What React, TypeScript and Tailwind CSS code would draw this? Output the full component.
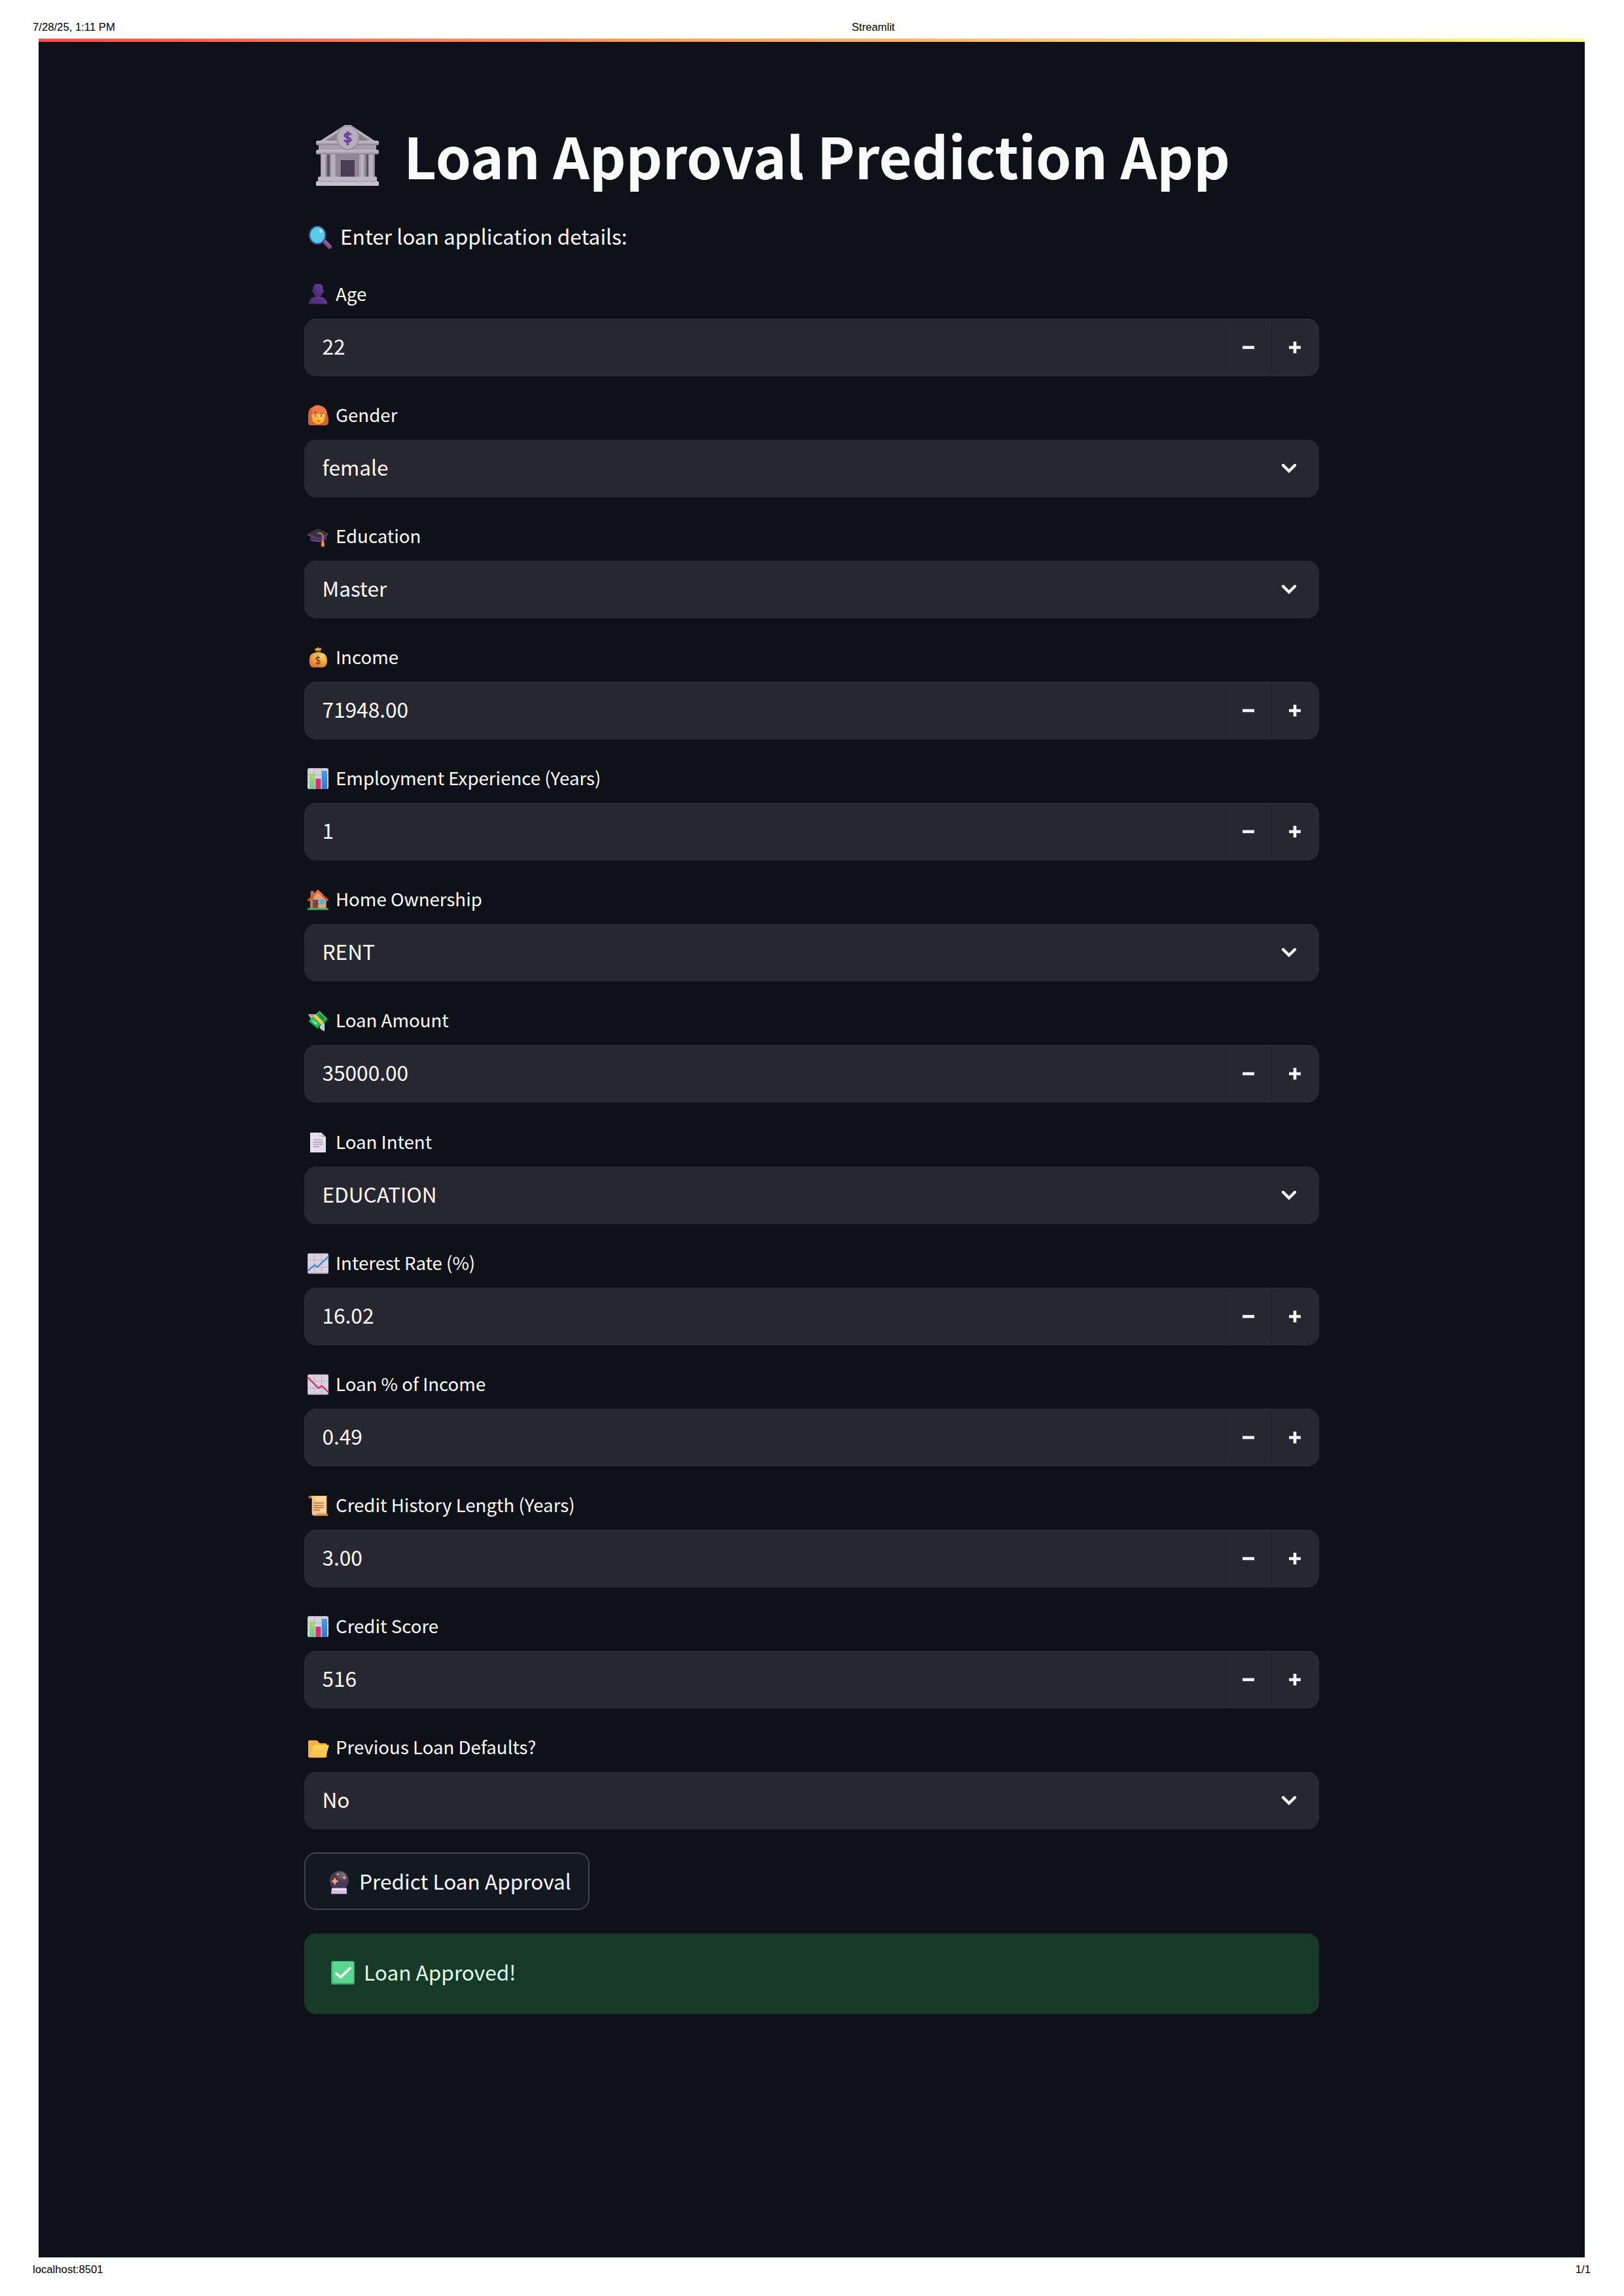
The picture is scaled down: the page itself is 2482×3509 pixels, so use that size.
import type { ReactNode } from "react";

function BankIcon() {
  return (
    <svg className="block h-[93px] w-[96px]" viewBox="0 0 96 93">
      <defs>
        <linearGradient id="pillar" x1="0" x2="1" y1="0" y2="0">
          <stop offset="0" stopColor="#aaa2b0" />
          <stop offset="0.55" stopColor="#beb6c4" />
          <stop offset="1" stopColor="#827a8b" />
        </linearGradient>
        <linearGradient id="beam" x1="0" x2="0" y1="0" y2="1">
          <stop offset="0" stopColor="#c6becb" />
          <stop offset="0.5" stopColor="#b4abba" />
          <stop offset="1" stopColor="#8b7f95" />
        </linearGradient>
      </defs>
      <path d="M44 0h9l38 25H5z" fill="#b8afbd" />
      <path d="M33 12v12H14zM64 12v12h18z" fill="#89828f" />
      <path d="M7 44h83v36H7z" fill="#8e8795" />
      <path d="M17 44h4v36h-4zM77 44h3v36h-3z" fill="#5a5361" />
      <rect x="7" y="43" width="10" height="37" fill="url(#pillar)" />
      <rect x="22" y="43" width="10" height="37" fill="url(#pillar)" />
      <rect x="66" y="43" width="10" height="37" fill="url(#pillar)" />
      <rect x="80" y="43" width="10" height="37" fill="url(#pillar)" />
      <rect x="38" y="54" width="21" height="25" rx="1" fill="#4a3e58" />
      <path d="M38.500 79V54.500H59" fill="none" stroke="#382d45" strokeWidth="1.200" />
      <rect x="4" y="30" width="88" height="9" fill="#a8a0ae" />
      <rect x="0" y="24" width="96" height="7" rx="2.500" fill="url(#beam)" />
      <rect x="0" y="38" width="96" height="7" rx="2.500" fill="url(#beam)" />
      <ellipse cx="48.500" cy="19.800" rx="17.400" ry="19" fill="#9990a1" />
      <ellipse cx="48.500" cy="19.200" rx="15.500" ry="17" fill="#b7aebd" />
      <path
        d="M53 15.500c-1-3-9-3-9 .6 0 3.600 9 3 9 6.700 0 3.700-8.500 3.400-9.400.2M48.300 10v21"
        fill="none"
        stroke="#6f489c"
        strokeWidth="3.400"
      />
      <rect x="3" y="79" width="90" height="8" rx="1.500" fill="#bfb6c5" />
      <rect x="0" y="86" width="96" height="7" rx="1.500" fill="#c9c0cf" />
      <path d="M4 86.300h88" stroke="#988fa0" strokeWidth="1" />
    </svg>
  );
}

function MagnifierIcon() {
  return (
    <svg className="block h-[36px] w-[35px]" viewBox="0 0 35 36">
      <path d="M23 23l8.500 9" stroke="#84498c" strokeWidth="6.600" strokeLinecap="round" />
      <path d="M24.500 22.500l7.500 8" stroke="#a05fa0" strokeWidth="2" strokeLinecap="round" />
      <ellipse cx="13.300" cy="14.300" rx="12.200" ry="13.300" fill="#5ccbea" stroke="#3d568f" strokeWidth="2.200" />
      <ellipse cx="18.500" cy="8" rx="2.500" ry="3" fill="#a6e6f8" />
    </svg>
  );
}

function CrystalBallIcon() {
  return (
    <svg className="block h-[36px] w-[31px]" viewBox="0 0 31 36">
      <defs>
        <radialGradient id="ball" cx="0.68" cy="0.2" r="0.8">
          <stop offset="0" stopColor="#786e82" />
          <stop offset="0.5" stopColor="#463b55" />
          <stop offset="1" stopColor="#4a3564" />
        </radialGradient>
      </defs>
      <circle cx="15.300" cy="15" r="14.600" fill="url(#ball)" />
      <path d="M4 26.500h22.500l.8 9H3z" fill="#d4bbe8" />
      <path d="M4.500 27h22l.2 3H4z" fill="#eadcf4" />
      <path d="M8.800 10l1.900 4.300 4.200 1.900-4.200 1.900-1.900 4.300-1.900-4.300-4.200-1.900 4.200-1.900z" fill="#ffa765" />
      <path d="M13.300 2.500l.8 2 2 .9-2 .8-.8 2-.9-2-2-.8 2-.9z" fill="#f0a45c" />
      <path d="M23.300 7l1.200 2.400 2.400 1.100-2.400 1.100-1.200 2.400-1.100-2.400-2.400-1.100 2.400-1.100z" fill="#f3a955" />
    </svg>
  );
}

function CheckIcon() {
  return (
    <svg className="block h-[36px] w-[36px]" viewBox="0 0 36 36">
      <rect width="36" height="36" rx="3" fill="#42a672" />
      <rect x="2" y="1" width="32.500" height="32.500" rx="2" fill="#5bd68f" />
      <path d="M8 19l6.500 6L29 11" fill="none" stroke="#fff" strokeWidth="3.600" strokeLinecap="round" strokeLinejoin="round" />
    </svg>
  );
}

function Glyph({ children }: { children: ReactNode }) {
  return (
    <svg className="ml-[5px] block h-[32px] w-[32px] shrink-0 overflow-visible" viewBox="0 0 96 96">
      {children}
    </svg>
  );
}

const person = (
  <Glyph>
    <defs>
      <linearGradient id="person" x1="1" x2="0" y1="0" y2="1">
        <stop offset="0" stopColor="#68409f" />
        <stop offset="1" stopColor="#432668" />
      </linearGradient>
    </defs>
    <path d="M26 14Q28 0 42 0h14q14 2 14 14v12q6 0 5 8-1 6-6 7-5 18-21 18T28 41q-6-1-7-8-1-7 5-7z" fill="url(#person)" />
    <path d="M5 92q4-34 43-34t43 34z" fill="url(#person)" />
  </Glyph>
);

const woman = (
  <Glyph>
    <defs>
      <radialGradient id="face" cx="0.6" cy="0.45" r="0.6">
        <stop offset="0" stopColor="#ffd23c" />
        <stop offset="1" stopColor="#f8a42c" />
      </radialGradient>
    </defs>
    <path d="M3 50Q3 12 24 9 32 0 48 0q12 0 18 8 24 2 25 36 6 12 5 36-4 13-14 13H14Q2 93 3 78z" fill="#d65f3c" />
    <path d="M22 38q-8 8-2 20 0 28 28 30 30-1 31-30 8-12 0-20-28-2-57 0z" fill="url(#face)" />
    <path d="M20 40Q16 8 40 4q42-8 48 36l-10-2Q48 40 34 24q-4 12-14 16z" fill="#eb7b48" />
    <ellipse cx="34" cy="50" rx="8" ry="5" fill="#fff" />
    <ellipse cx="64" cy="50" rx="8" ry="5" fill="#fff" />
    <circle cx="36" cy="50" r="4" fill="#573347" />
    <circle cx="63" cy="50" r="4" fill="#573347" />
    <path d="M26 41q8-5 16-1M56 40q8-4 16 1" stroke="#9c4728" strokeWidth="3" fill="none" />
    <path d="M48 50v14" stroke="#e38a27" strokeWidth="3" />
    <path d="M42 72q8 4 16-2-4 9-16 2z" fill="#8e2339" stroke="#b12a3d" strokeWidth="2" />
  </Glyph>
);

const cap = (
  <Glyph>
    <path d="M10 40l4 24q34 14 72 0l4-26z" fill="#4e3270" />
    <path d="M12 62q8 8 36 8h12" stroke="#8c71ab" strokeWidth="3" fill="none" />
    <path d="M0 36l48-24 46 22v6L50 60 0 42z" fill="#5e4a72" />
    <path d="M0 36l48-24 46 22-44 22z" fill="#3b3143" />
    <path d="M46 33q25-4 25 20v16" stroke="#d5913c" strokeWidth="5" fill="none" />
    <path d="M67 64q12 2 11 28l-8 4-8-5q0-20 5-27z" fill="#fa7d48" />
  </Glyph>
);

const moneyBag = (
  <Glyph>
    <defs>
      <radialGradient id="bag" cx="0.65" cy="0.25" r="0.8">
        <stop offset="0" stopColor="#ffd25c" />
        <stop offset="0.5" stopColor="#f2ab3e" />
        <stop offset="1" stopColor="#d9743b" />
      </radialGradient>
    </defs>
    <path d="M36 16l-3-10 8 1 8-7 5 6 9-2-3 14z" fill="#f2a941" />
    <path d="M38 15h22v12H38z" fill="#7a4c43" />
    <path d="M38 25q-30 2-30 36 0 32 20 32h42q20-2 20-32 0-32-30-36z" fill="url(#bag)" />
    <path d="M57 51q-4-6-10-5-8 1-8 7t9 7q9 2 9 8 0 7-9 7-8 0-10-6M48 39v44" fill="none" stroke="#7b4a3c" strokeWidth="5" />
  </Glyph>
);

const barChart = (
  <Glyph>
    <defs>
      <linearGradient id="greenBar" x1="0" x2="0" y1="0" y2="1">
        <stop offset="0" stopColor="#a9df53" />
        <stop offset="1" stopColor="#54d68b" />
      </linearGradient>
      <linearGradient id="blueBar" x1="0" x2="0" y1="0" y2="1">
        <stop offset="0" stopColor="#35a2ee" />
        <stop offset="1" stopColor="#3276c9" />
      </linearGradient>
    </defs>
    <rect width="96" height="96" rx="8" fill="#d9d0df" />
    <path d="M32 0v96M64 0v96M0 31h96M0 64h96" stroke="#b5adbc" strokeWidth="3" />
    <rect x="9" y="23" width="22" height="73" rx="2" fill="url(#greenBar)" />
    <rect x="37" y="48" width="24" height="48" rx="2" fill="#dd3070" />
    <rect x="66" y="12" width="24" height="84" rx="2" fill="url(#blueBar)" />
  </Glyph>
);

const house = (
  <Glyph>
    <path d="M14 8h15v32H14z" fill="#a97750" />
    <path d="M12 44L48 10l38 34v44H12z" fill="#dca575" />
    <path d="M12 44L30 26v62H12z" fill="#b87d50" />
    <path d="M48 2L1 47v7h7l40-38 40 38h8v-7z" fill="#dc4d36" />
    <path d="M48 2L26 24l6 6 16-15 16 15 6-6z" fill="#f26e3f" />
    <rect x="24" y="48" width="25" height="38" fill="#774b48" />
    <circle cx="43" cy="66" r="3" fill="#382b35" />
    <rect x="55" y="46" width="24" height="23" fill="#46b7ee" />
    <rect x="0" y="86" width="96" height="9" rx="3" fill="#3fae68" />
  </Glyph>
);

const flyingMoney = (
  <Glyph>
    <path d="M3 18h40v14L18 44z" fill="#bdb8c0" />
    <path d="M12 25l28-4M14 35l22-5" stroke="#87818d" strokeWidth="3" />
    <path d="M55 3l37 37v8L46 86 5 52z" fill="#117a3c" />
    <path d="M55 3l35 35-46 40L7 47z" fill="#2bc161" />
    <path d="M54 12l26 26-10 9-26-25z" fill="#169149" />
    <path d="M27 28l10-9 37 38-10 10z" fill="#ffcc3a" />
    <path d="M32 46q-8 2-5 9 7 4 13 0 0 8-7 8" fill="none" stroke="#a5efbd" strokeWidth="4" />
    <path d="M60 68l18-10v38q-12-3-22-14z" fill="#dad6dc" />
    <path d="M68 66v25" stroke="#9a94a0" strokeWidth="3" />
  </Glyph>
);

const page = (
  <Glyph>
    <path d="M12 3h52l20 20v71H12z" fill="#e8def0" />
    <path d="M64 3v20h20z" fill="#c0b6c9" />
    <path d="M55 5v19" stroke="#cdc2d6" strokeWidth="3" />
    <path d="M26 36h44M26 47h44M26 57h44M26 67h28" stroke="#958a9e" strokeWidth="3.500" />
  </Glyph>
);

const trendSheet = (
  <>
    <rect y="2" width="96" height="93" rx="6" fill="#baa5cb" />
    <rect x="2" y="2" width="93" height="88" rx="5" fill="#dad0e2" />
    <path d="M32 2v90M65 2v90M0 33h96M0 65h96" stroke="#b7adbf" strokeWidth="3" />
  </>
);

const trendUp = (
  <Glyph>
    {trendSheet}
    <path d="M2 81l29-25q3-2 6 2l7 7L95 17" fill="none" stroke="#3e8ecf" strokeWidth="7" />
  </Glyph>
);

const trendDown = (
  <Glyph>
    {trendSheet}
    <path d="M1 15l48 48q3 2 6-1 8-11 15-4l25 25" fill="none" stroke="#d93459" strokeWidth="7" />
  </Glyph>
);

const scroll = (
  <Glyph>
    <path d="M4 8q0-6 8-5h12v12H8q-4 0-4-7z" fill="#b7643c" />
    <path d="M14 3h74v90H24l-4-8V16q0-10-6-13z" fill="#f9c587" />
    <path d="M34 6h48v72H56z" fill="#ffd39a" />
    <path d="M40 86h54q4 8-5 9H27q8 0 13-9z" fill="#dc8459" />
    <path d="M28 36h46M28 47h46M28 58h46M28 68h30" stroke="#b9653e" strokeWidth="4.500" />
  </Glyph>
);

const folder = (
  <Glyph>
    <defs>
      <linearGradient id="folder" x1="0" x2="0" y1="0" y2="1">
        <stop offset="0" stopColor="#ffd750" />
        <stop offset="1" stopColor="#ffb954" />
      </linearGradient>
    </defs>
    <path d="M3 17l5-3h32q4 0 7 4l9 10h26q6 0 6 6v58H8q-5 0-5-5z" fill="#f5b13c" />
    <path d="M26 39q1-4 6-4h62q5 0 4 5L84 88q-1 6-7 6H10q-6 0-4-6z" fill="url(#folder)" />
  </Glyph>
);

type Field = { icon: ReactNode; label: string; value: string; kind: "number" | "select" };

const fields: Field[] = [
  { icon: person, label: "Age", value: "22", kind: "number" },
  { icon: woman, label: "Gender", value: "female", kind: "select" },
  { icon: cap, label: "Education", value: "Master", kind: "select" },
  { icon: moneyBag, label: "Income", value: "71948.00", kind: "number" },
  { icon: barChart, label: "Employment Experience (Years)", value: "1", kind: "number" },
  { icon: house, label: "Home Ownership", value: "RENT", kind: "select" },
  { icon: flyingMoney, label: "Loan Amount", value: "35000.00", kind: "number" },
  { icon: page, label: "Loan Intent", value: "EDUCATION", kind: "select" },
  { icon: trendUp, label: "Interest Rate (%)", value: "16.02", kind: "number" },
  { icon: trendDown, label: "Loan % of Income", value: "0.49", kind: "number" },
  { icon: scroll, label: "Credit History Length (Years)", value: "3.00", kind: "number" },
  { icon: barChart, label: "Credit Score", value: "516", kind: "number" },
  { icon: folder, label: "Previous Loan Defaults?", value: "No", kind: "select" },
];

function Stepper() {
  return (
    <div className="flex h-full">
      <button className="flex w-[71px] items-center justify-center border-l border-[#24252e]">
        <svg className="h-[18px] w-[18px]" viewBox="0 0 18 18">
          <path d="M0 9h18" stroke="#fafafa" strokeWidth="4.600" />
        </svg>
      </button>
      <button className="flex w-[71px] items-center justify-center border-l border-[#1c1d26]">
        <svg className="h-[18px] w-[18px]" viewBox="0 0 18 18">
          <path d="M0 9h18M9 0v18" stroke="#fafafa" strokeWidth="4.600" />
        </svg>
      </button>
    </div>
  );
}

function FieldRow({ field }: { field: Field }) {
  return (
    <div className="h-[185.080px]">
      <div className="flex h-[53px] items-start">
        {field.icon}
        <span className="ml-[11px] whitespace-nowrap text-[27.650px] leading-[29px]">{field.label}</span>
      </div>
      <div
        className={
          field.kind === "number"
            ? "flex h-[88px] items-center justify-between rounded-[17.600px] border-2 border-[#292a33] bg-[#262730] pl-[25.500px]"
            : "flex h-[88px] items-center justify-between rounded-[17.600px] bg-[#262730] pl-[27.500px]"
        }
      >
        <span className="pb-[6px] text-[31.600px] leading-[46px]">{field.value}</span>
        {field.kind === "number" ? (
          <Stepper />
        ) : (
          <svg className="mr-[34px] h-[16px] w-[24px]" viewBox="0 0 24 16">
            <path d="M3 3l9 9 9-9" fill="none" stroke="#fafafa" strokeWidth="4.400" strokeLinecap="round" strokeLinejoin="miter" />
          </svg>
        )}
      </div>
    </div>
  );
}

export default function App() {
  return (
    <div className="flex h-[3509px] w-[2482px] flex-col bg-white font-['Liberation_Sans',sans-serif] text-[16.700px] text-black">
      <header className="grid h-[59px] grid-cols-3 pt-[32px] pr-[51px] pl-[50px] leading-[20px]">
        <span>7/28/25, 1:11 PM</span>
        <span className="pl-[458px]">Streamlit</span>
      </header>
      <main className="mr-[60px] ml-[59px] h-[3391px] bg-[#0e1117] font-['Noto_Sans_CJK_SC',sans-serif] text-[#fafafa]">
        <div className="h-[5px] bg-linear-to-r from-[#ff4b4b] to-[#fffd80]" />
        <div className="ml-[406px] w-[1551px]">
          <h1 className="flex h-[281px] items-start pt-[127px] pl-[18px]">
            <BankIcon />
            <span className="-mt-[20px] ml-[38px] text-[86.900px] leading-[130px] font-bold tracking-[-0.13px] whitespace-nowrap">
              Loan Approval Prediction App
            </span>
          </h1>
          <p className="flex h-[89px] items-start pl-[7px]">
            <MagnifierIcon />
            <span className="ml-[13px] text-[31.600px] leading-[30px] whitespace-nowrap">Enter loan application details:</span>
          </p>
          {fields.map((field) => (
            <FieldRow key={field.label} field={field} />
          ))}
          <button className="-mt-[9px] flex h-[88px] w-[436px] items-start rounded-[17.600px] border-2 border-[#41444c] bg-[#131720] pt-[26px] pl-[36px]">
            <CrystalBallIcon />
            <span className="ml-[15px] text-[31.600px] leading-[31px] whitespace-nowrap">Predict Loan Approval</span>
          </button>
          <div className="mt-[36px] flex h-[123px] items-start rounded-[17.600px] bg-[#173928] pt-[42px] pl-[41px] text-[#dffde9]">
            <CheckIcon />
            <span className="ml-[14px] text-[31.600px] leading-[32px] whitespace-nowrap">Loan Approved!</span>
          </div>
        </div>
      </main>
      <footer className="flex justify-between pt-[9px] pr-[51px] pl-[50px] leading-[20px]">
        <span>localhost:8501</span>
        <span>1/1</span>
      </footer>
    </div>
  );
}
